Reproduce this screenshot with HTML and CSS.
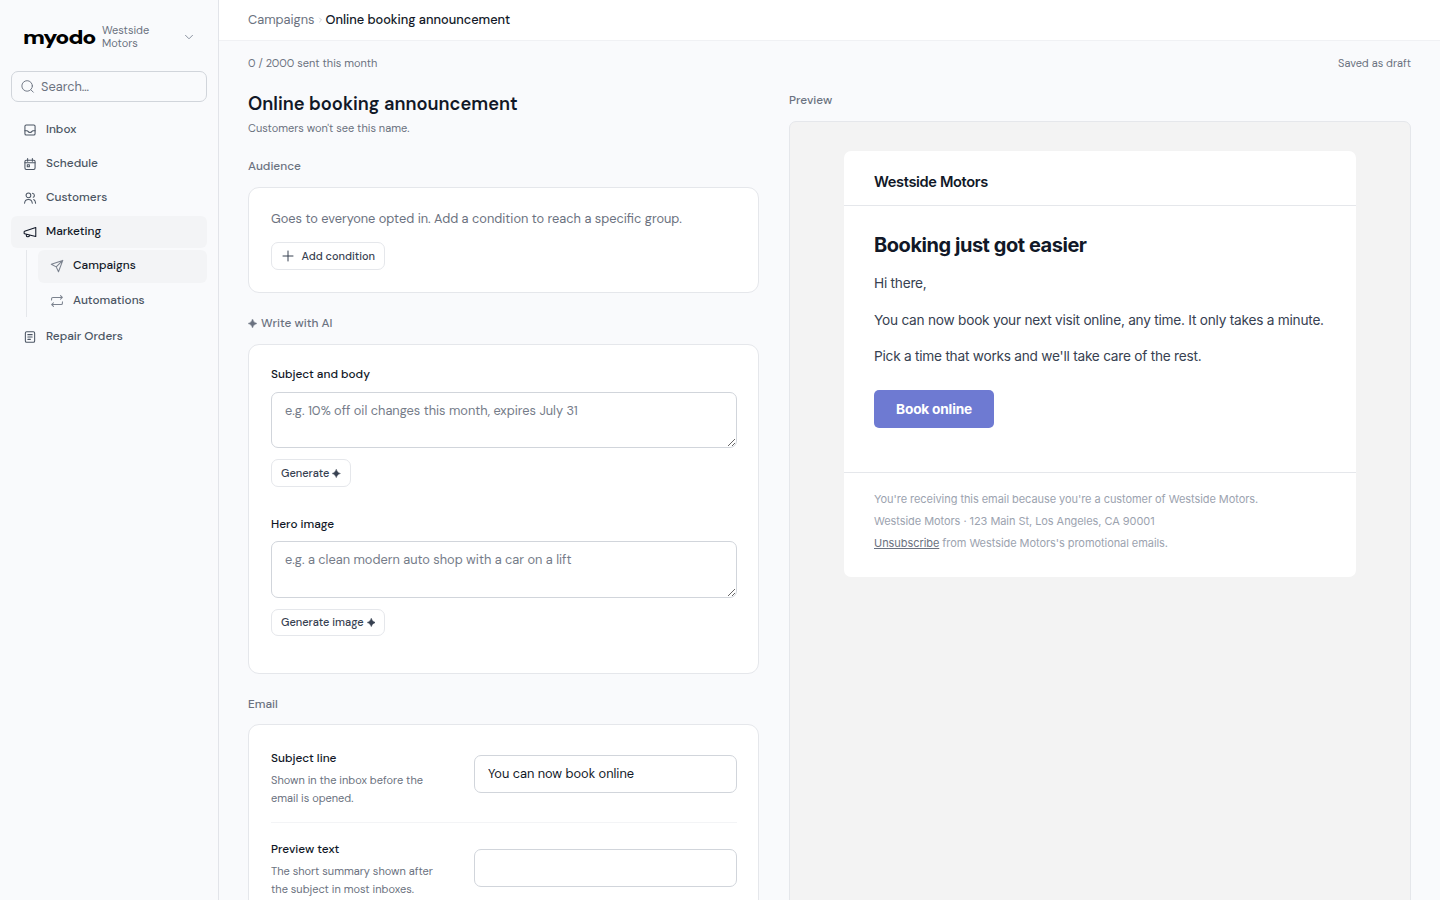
FILE: index.html
```html
<!DOCTYPE html>
<html lang="en">
<head>
    <meta charset="UTF-8">
    <meta name="viewport" content="width=device-width, initial-scale=1.0">
    <title>Online booking announcement</title>
    <link rel="stylesheet" href="styles.css">
</head>
<body>

    <aside class="sidebar">
        <div class="brand">
            <span class="logo">myodo</span>
            <span class="shop">Westside<br>Motors</span>
            <svg class="chevron" viewBox="0 0 12 12"><path d="M2.500 4.300 6 7.800l3.500-3.500"/></svg>
        </div>

        <div class="search">
            <svg class="icon" viewBox="0 0 16 16"><circle cx="7.600" cy="7.400" r="5.600"/><path d="m11.700 11.600 2.500 2.500"/></svg>
            <span>Search…</span>
        </div>

        <nav class="nav">
            <a class="nav-item">
                <svg class="icon" viewBox="0 0 16 16"><rect x="2.200" y="2.200" width="11.600" height="11.600" rx="1.500"/><path d="M2.200 8.800h2.600c.6 0 .9 2 3.200 2s2.600-2 3.200-2h2.600"/></svg>
                <span>Inbox</span>
            </a>
            <a class="nav-item">
                <svg class="icon" viewBox="0 0 16 16"><rect x="2.200" y="3.600" width="11.600" height="10.600" rx="1.500"/><path d="M5.300 1.700v3.200M10.700 1.700v3.200M2.200 6.600h11.600"/><rect x="4.900" y="8.800" width="2.400" height="2.400"/></svg>
                <span>Schedule</span>
            </a>
            <a class="nav-item">
                <svg class="icon" viewBox="0 0 16 16"><circle cx="6.200" cy="4.900" r="2.700"/><path d="M1.800 14c.2-2.700 2-4.300 4.400-4.300s4.200 1.600 4.400 4.300M10.800 2.600c1.500.3 2.200 1.200 2.200 2.400 0 1-.5 1.800-1.300 2.200M12.300 9.700c1.300.8 2 2.200 2.100 4.300"/></svg>
                <span>Customers</span>
            </a>
            <a class="nav-item active">
                <svg class="icon" viewBox="0 0 16 16"><path d="M14.600 2.800v10.400L1.800 9.900a.6.600 0 0 1-.5-.6V7.700c0-.3.200-.5.500-.6zM3.800 10.500v1.500c0 .9.700 1.500 1.600 1.500s2-.5 2-1.500v-.6"/></svg>
                <span>Marketing</span>
            </a>
            <div class="subnav">
                <a class="nav-item active">
                    <svg class="icon" viewBox="0 0 16 16"><path d="M14.600 1.600 1.500 6.100l5.600 2.900 2.600 5.600zM7.100 9l7.500-7.400"/></svg>
                    <span>Campaigns</span>
                </a>
                <a class="nav-item">
                    <svg class="icon" viewBox="0 0 16 16"><path d="M1.800 6.900V5.400c0-.9.600-1.500 1.500-1.500h10.700M12 1.800l2.100 2.100L12 6M14.200 9v1.600c0 .9-.6 1.500-1.500 1.500H2M4 10l-2.100 2.100L4 14.200"/></svg>
                    <span>Automations</span>
                </a>
            </div>
            <a class="nav-item">
                <svg class="icon" viewBox="0 0 16 16"><rect x="2.700" y="1.900" width="10.600" height="12.200" rx="1.500"/><path d="M5.500 5.300h5M5.500 8h5M5.500 10.700h3"/></svg>
                <span>Repair Orders</span>
            </a>
        </nav>
    </aside>

    <main class="main">
        <header class="topbar">
            <a class="crumb">Campaigns</a>
            <svg class="crumb-sep" viewBox="0 0 5 8"><path d="m1.500 2 2 2-2 2"/></svg>
            <span class="crumb-current">Online booking announcement</span>
        </header>

        <div class="status">
            <span>0 / 2000 sent this month</span>
            <span>Saved as draft</span>
        </div>

        <div class="columns">
            <section class="form">
                <h1>Online booking announcement</h1>
                <p class="hint">Customers won't see this name.</p>

                <h2 class="label">Audience</h2>
                <div class="card audience">
                    <p>Goes to everyone opted in. Add a condition to reach a specific group.</p>
                    <button class="btn">
                        <svg class="plus" viewBox="0 0 12 12"><path d="M6 1v10M1 6h10"/></svg>
                        <span>Add condition</span>
                    </button>
                </div>

                <h2 class="label"><svg class="spark" viewBox="0 0 10 10"><path d="M5 0Q6 4 10 5 6 6 5 10 4 6 0 5 4 4 5 0z"/></svg><span>Write with AI</span></h2>
                <div class="card ai">
                    <div class="field">
                        <label for="subject-prompt">Subject and body</label>
                        <textarea id="subject-prompt" placeholder="e.g. 10% off oil changes this month, expires July 31"></textarea>
                        <button class="btn"><span>Generate</span><svg class="spark" viewBox="0 0 10 10"><path d="M5 0Q6 4 10 5 6 6 5 10 4 6 0 5 4 4 5 0z"/></svg></button>
                    </div>
                    <div class="field">
                        <label for="image-prompt">Hero image</label>
                        <textarea id="image-prompt" placeholder="e.g. a clean modern auto shop with a car on a lift"></textarea>
                        <button class="btn"><span>Generate image</span><svg class="spark" viewBox="0 0 10 10"><path d="M5 0Q6 4 10 5 6 6 5 10 4 6 0 5 4 4 5 0z"/></svg></button>
                    </div>
                </div>

                <h2 class="label">Email</h2>
                <div class="card email-fields">
                    <div class="row">
                        <div class="row-text">
                            <h3>Subject line</h3>
                            <p>Shown in the inbox before the email is opened.</p>
                        </div>
                        <input type="text" value="You can now book online">
                    </div>
                    <div class="row">
                        <div class="row-text">
                            <h3>Preview text</h3>
                            <p>The short summary shown after the subject in most inboxes.</p>
                        </div>
                        <input type="text">
                    </div>
                </div>
            </section>

            <section class="preview">
                <h2 class="label">Preview</h2>
                <div class="preview-frame">
                    <article class="mail">
                        <div class="mail-head">Westside Motors</div>
                        <div class="mail-body">
                            <h2>Booking just got easier</h2>
                            <p>Hi there,</p>
                            <p>You can now book your next visit online, any time. It only takes a minute.</p>
                            <p>Pick a time that works and we'll take care of the rest.</p>
                            <a class="mail-btn">Book online</a>
                        </div>
                        <div class="mail-foot">
                            <p>You're receiving this email because you're a customer of Westside Motors.</p>
                            <p>Westside Motors · 123 Main St, Los Angeles, CA 90001</p>
                            <p><a>Unsubscribe</a> from Westside Motors's promotional emails.</p>
                        </div>
                    </article>
                </div>
            </section>
        </div>
    </main>

</body>
</html>
```
FILE: styles.css
```css
* {
    box-sizing: border-box;
}

body {
    display: flex;
    height: 100vh;
    margin: 0;
    overflow: hidden;
    background-color: #f9fafc;
    color: #111827;
    font-family: "DM Sans", Inter, "Liberation Sans", sans-serif;
    font-size: 11.85px;
}

h1, h2, h3, p {
    margin: 0;
    font-weight: 500;
}

svg {
    flex: none;
    fill: none;
    stroke: currentColor;
    stroke-linecap: round;
    stroke-linejoin: round;
}

/* sidebar */
.sidebar {
    flex: none;
    width: 219px;
    padding: 23px 11px 0;
    border-right: 1px solid #e2e4e9;
}

.brand {
    display: flex;
    align-items: center;
    height: 28px;
    padding: 0 12px;
}

.logo {
    width: 79px;
    color: #000;
    font-size: 20px;
    font-weight: 900;
    letter-spacing: -1.1px;
    line-height: 24px;
    transform: scaleX(1.15);
    transform-origin: left;
}

.shop {
    flex: 1;
    color: #6b7280;
    font-size: 11px;
    line-height: 13px;
}

.chevron {
    width: 12px;
    height: 12px;
    color: #8b93a1;
}

.search {
    display: flex;
    align-items: center;
    gap: 6px;
    height: 31px;
    margin-top: 20px;
    padding: 0 8px;
    border: 1px solid #d1d5db;
    border-radius: 7px;
    color: #6b7280;
    font-size: 12.8px;
}

.icon {
    width: 15px;
    height: 15px;
}

.nav-item .icon {
    width: 14px;
    height: 14px;
    margin: 2px -0.5px 0 0.5px;
    stroke-width: 1.2;
}

.nav {
    display: flex;
    flex-direction: column;
    gap: 2px;
    margin-top: 12px;
}

.nav-item {
    display: flex;
    align-items: center;
    gap: 10px;
    height: 32px;
    padding: 0 11px 2px;
    border-radius: 6px;
    color: #4b5563;
    font-weight: 500;
}

.nav-item.active {
    background-color: #f3f4f6;
    color: #111827;
}

.subnav {
    display: flex;
    flex-direction: column;
    gap: 1px;
    margin: 0 0 2px 15px;
    padding-left: 11px;
    border-left: 1px solid #e5e7eb;
}

.subnav .nav-item {
    height: 33px;
}

.subnav .nav-item.active {
    padding-bottom: 3px;
}

.subnav .icon {
    color: #7b828e;
}

/* main area */
.main {
    flex: 1;
    min-width: 0;
}

.topbar {
    display: flex;
    align-items: center;
    height: 41px;
    padding: 0 29px 1px;
    border-bottom: 1px solid #f0f1f4;
    background-color: #fff;
    font-size: 12.8px;
}

.crumb {
    color: #6b7280;
}

.crumb-sep {
    width: 5px;
    height: 8px;
    margin: 0 3px;
    color: #cdd1d8;
}

.crumb-current {
    font-weight: 500;
}

.status {
    display: flex;
    justify-content: space-between;
    padding: 14px 29px 0;
    color: #6b7280;
    font-size: 10.97px;
    line-height: 16px;
}

.columns {
    display: grid;
    grid-template-columns: 511px 622px;
    gap: 30px;
    padding: 20px 29px 0;
}

h1 {
    margin-top: 1px;
    font-size: 18.25px;
    font-weight: 600;
    line-height: 24px;
}

.hint {
    margin-top: 3px;
    color: #6b7280;
    font-size: 11px;
    font-weight: 400;
    line-height: 18px;
}

.label {
    display: flex;
    align-items: center;
    color: #6b7280;
    font-size: 11.85px;
    font-weight: 500;
    line-height: 18px;
}

.form .label {
    margin: 20px 0 12px;
}

.form .card + .label {
    margin-top: 21px;
}

.form .ai + .label {
    margin-bottom: 11px;
}

.card {
    border: 1px solid #e5e7eb;
    border-radius: 11px;
    background-color: #fff;
}

.audience {
    height: 106px;
    padding: 21px 21px 0 22px;
}

.audience p {
    margin-bottom: 13px;
    color: #6b7280;
    font-size: 12.8px;
    font-weight: 400;
    line-height: 20px;
}

.btn {
    display: inline-flex;
    align-items: center;
    height: 28px;
    padding: 0 9px;
    border: 1px solid #e5e7eb;
    border-radius: 7px;
    background-color: #fff;
    color: #374151;
    font-family: inherit;
    font-size: 11px;
    font-weight: 500;
}

.plus {
    width: 12px;
    height: 12px;
    margin: 0 7.5px 0 1px;
}

.spark {
    width: 9px;
    height: 9px;
    margin-right: 4px;
    fill: currentColor;
    stroke: currentColor;
    stroke-width: 0.4;
}

.btn .spark {
    width: 8.5px;
    margin: 0 0 0 3px;
}

.ai {
    height: 330px;
    padding: 20px 21px 0 22px;
}

.field {
    height: 150px;
}

.field label {
    display: block;
    margin-bottom: 9px;
    font-weight: 500;
    line-height: 18px;
}

textarea {
    display: block;
    width: 100%;
    height: 56px;
    margin-bottom: 11px;
    padding: 8px 13px;
    border: 1px solid #d1d5db;
    border-radius: 7px;
    background-color: #fff;
    font-family: inherit;
    font-size: 12.8px;
    line-height: 20px;
}

textarea::placeholder {
    color: #757c89;
}

.field + .field label {
    margin-bottom: 8px;
}

.field + .field textarea {
    height: 57px;
}

.field + .field .btn {
    height: 27px;
    padding-bottom: 1px;
}

.email-fields {
    padding: 8px 21px 8px 22px;
}

.row {
    display: grid;
    grid-template-columns: 170px 263px;
    justify-content: space-between;
    align-items: center;
    padding: 16px 0 15px;
    border-bottom: 1px solid #f3f4f6;
}

.row + .row {
    padding-top: 17px;
}

h3 {
    font-size: 11.85px;
    line-height: 18px;
}

.row-text p {
    margin-top: 4px;
    color: #6b7280;
    font-size: 11px;
    font-weight: 400;
    line-height: 18px;
}

input {
    height: 38px;
    margin-bottom: 2px;
    padding: 0 13px 1px;
    border: 1px solid #d1d5db;
    border-radius: 7px;
    color: #111827;
    font-family: inherit;
    font-size: 12.8px;
}

.row:first-child input {
    margin-bottom: 8px;
}

/* mail preview */
.preview-frame {
    height: 900px;
    margin-top: 12px;
    padding: 29px 54px;
    border: 1px solid #e5e7eb;
    border-radius: 7px;
    background-color: #f3f3f3;
}

.mail {
    height: 426px;
    border-radius: 7px;
    background-color: #fff;
    font-family: Inter, "Liberation Sans", sans-serif;
}

.mail-head {
    height: 55px;
    padding: 21px 30px 0;
    border-bottom: 1px solid #e5e7eb;
    font-size: 14.6px;
    font-weight: 600;
    letter-spacing: -0.35px;
    line-height: 20px;
}

.mail-body {
    height: 267px;
    padding: 26px 30px 0;
    border-bottom: 1px solid #e5e7eb;
}

.mail-body h2 {
    margin-bottom: 13px;
    font-size: 20px;
    font-weight: 700;
    letter-spacing: -0.46px;
    line-height: 26px;
}

.mail-body p {
    margin-bottom: 12.5px;
    color: #374151;
    font-size: 13.7px;
    font-weight: 400;
    letter-spacing: -0.25px;
    line-height: 24px;
    white-space: nowrap;
}

.mail-btn {
    display: inline-flex;
    align-items: center;
    justify-content: center;
    width: 120px;
    height: 38px;
    margin-top: 9px;
    border-radius: 5px;
    background-color: #6e7ad2;
    color: #fff;
    font-size: 13.7px;
    font-weight: 700;
    letter-spacing: -0.2px;
}

.mail-foot {
    padding: 15px 30px 0;
}

.mail-foot p {
    color: #9ca3af;
    font-size: 11px;
    font-weight: 400;
    letter-spacing: -0.06px;
    line-height: 22px;
}

.mail-foot a {
    color: #6b7280;
    text-decoration: underline;
}
```
